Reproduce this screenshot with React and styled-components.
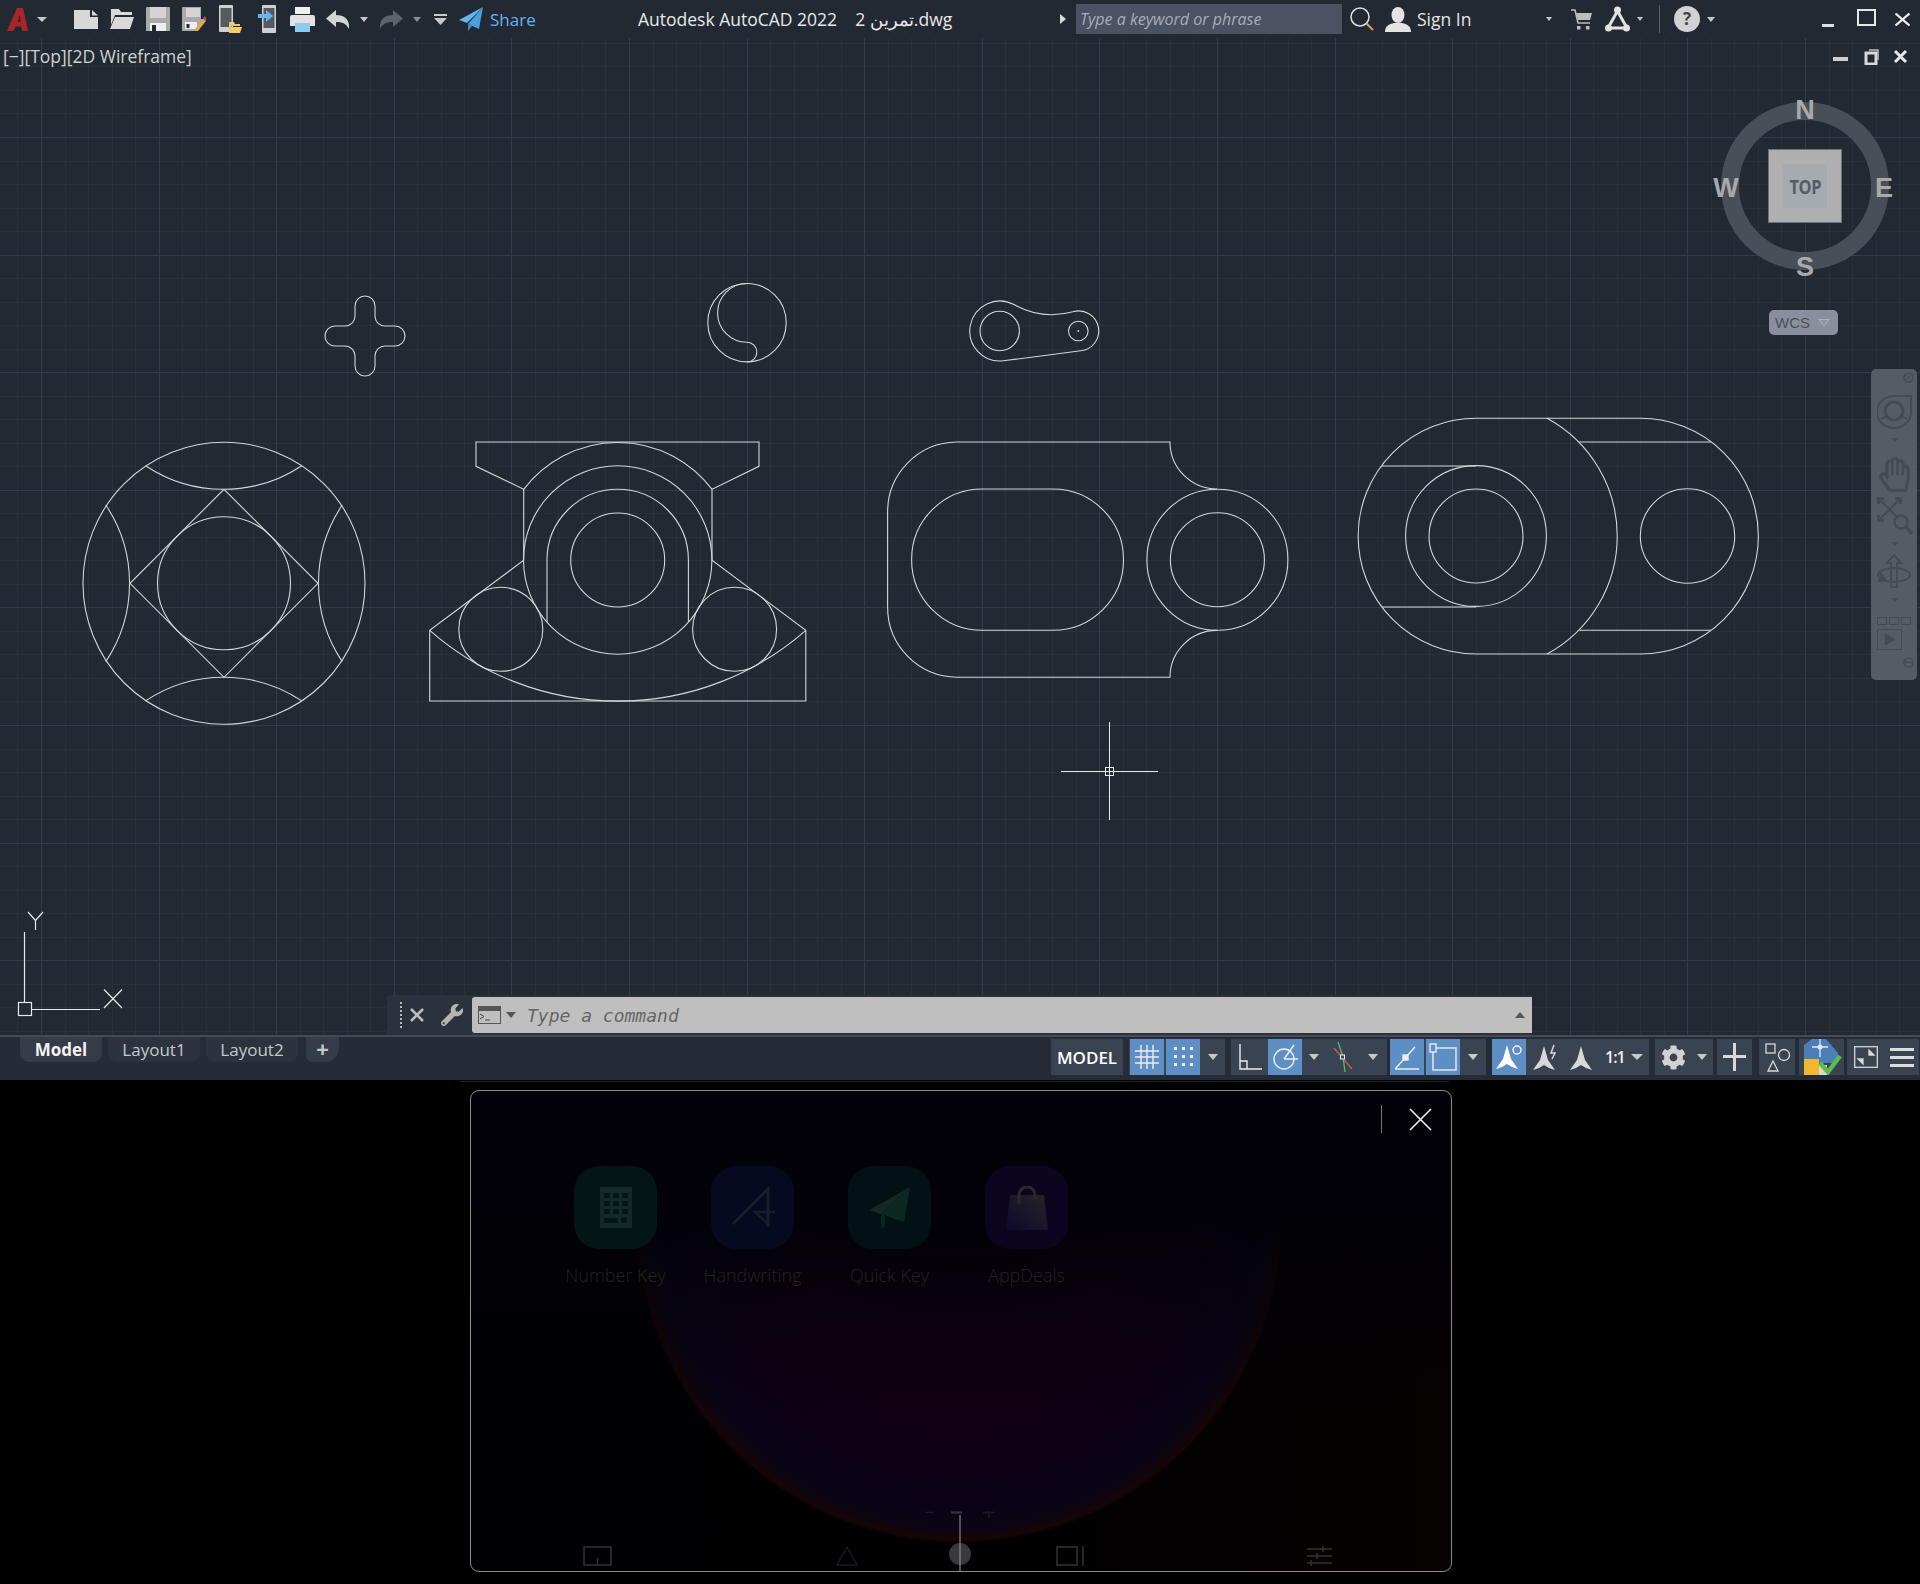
import React from "react";
import styled, { createGlobalStyle } from "styled-components";
import { FaCog, FaWrench, FaRegHandPaper } from "react-icons/fa";

const GlobalStyle = createGlobalStyle`
  html, body {
    margin: 0;
    background: #000;
    font-family: "Open Sans", "Liberation Sans", sans-serif;
  }
`;

const Page = styled.div`
  width: 1920px;
  height: 1584px;
  overflow: hidden;
  display: flex;
  flex-direction: column;
`;

/* title bar */
const TitleBar = styled.div`
  height: 38px;
  flex: none;
  display: flex;
  align-items: center;
  background: #222933;
  padding-left: 7px;
  color: #e4e4e4;
`;

const Ico = styled.svg`
  flex: none;
  display: block;
  margin-left: ${(p) => p.$ml || 0}px;
`;

const Caret = styled.span`
  flex: none;
  display: block;
  width: 0;
  height: 0;
  margin-left: ${(p) => p.$ml || 0}px;
  border-left: ${(p) => p.$w || 4}px solid transparent;
  border-right: ${(p) => p.$w || 4}px solid transparent;
  border-top: ${(p) => p.$h || 5}px solid ${(p) => p.$color || "#c9c9c9"};
`;

const ShareLabel = styled.span`
  margin-left: 7px;
  width: 44px;
  font-size: 17px;
  color: #62b5ee;
`;

const Title = styled.span`
  margin-left: 104px;
  width: 422px;
  font-size: 17.5px;
  white-space: pre;
  color: #e8e8e8;
`;

const SearchArrow = styled.span`
  flex: none;
  width: 0;
  height: 0;
  border-top: 5px solid transparent;
  border-bottom: 5px solid transparent;
  border-left: 6px solid #d8d8d8;
`;

const SearchBox = styled.div`
  flex: none;
  margin-left: 10px;
  width: 266px;
  height: 30px;
  background: #4a5264;
  display: flex;
  align-items: center;
  padding-left: 4px;
  box-sizing: border-box;
  font-size: 16px;
  font-style: italic;
  color: #a9adb8;
`;

const SignIn = styled.span`
  margin-left: 6px;
  width: 129px;
  font-size: 17.5px;
  color: #e4e4e4;
`;

const TitleSep = styled.span`
  flex: none;
  margin-left: 16px;
  width: 1px;
  height: 28px;
  background: #5a616e;
`;

/* drawing area */
const Canvas = styled.div`
  position: relative;
  height: 997px;
  flex: none;
  background: #222933;
  overflow: hidden;
`;

const Sheet = styled.svg`
  display: block;
`;

const ViewLabel = styled.span`
  position: absolute;
  left: 3px;
  top: 6px;
  font-size: 17.5px;
  color: #d0d0d0;
  white-space: pre;
`;

const ViewportControls = styled.svg`
  position: absolute;
  right: 12px;
  top: 11px;
`;

const Compass = styled.div`
  position: absolute;
  left: 1721px;
  top: 64px;
  width: 168px;
  height: 168px;
  box-sizing: border-box;
  border: 18px solid #484f59;
  border-radius: 50%;
  display: flex;
  align-items: center;
  justify-content: center;
`;

const CubeFace = styled.div`
  flex: none;
  width: 74px;
  height: 74px;
  box-sizing: border-box;
  background: #b0b0b0;
  border: 1px solid #6a6f78;
  display: flex;
  align-items: center;
  justify-content: center;
`;

const CubeInner = styled.div`
  width: 44px;
  height: 44px;
  background: #a5abaf;
  display: flex;
  align-items: center;
  justify-content: center;
`;

const CubeText = styled.span`
  font-size: 20px;
  font-weight: 700;
  color: #565b66;
  letter-spacing: -0.5px;
  transform: scaleX(0.82);
`;

const CompassLetter = styled.span`
  position: absolute;
  left: ${(p) => p.$x}px;
  top: ${(p) => p.$y}px;
  transform: translate(-50%, -50%);
  font-family: "Liberation Sans", sans-serif;
  font-size: 27px;
  font-weight: 700;
  color: #a9a9a9;
`;

const WcsBadge = styled.div`
  position: absolute;
  left: 1769px;
  top: 272px;
  width: 69px;
  height: 25px;
  box-sizing: border-box;
  padding-left: 6px;
  display: flex;
  align-items: center;
  gap: 8px;
  background: #8b8e9d;
  border-radius: 5px;
  font-family: "Liberation Sans", sans-serif;
  font-size: 15px;
  color: #4e5058;
`;

const NavBar = styled.div`
  position: absolute;
  left: 1871px;
  top: 331px;
  width: 46px;
  height: 311px;
  box-sizing: border-box;
  padding: 3px 0 0 6px;
  background: #555c65;
  border-radius: 5px;
  display: flex;
  flex-direction: column;
  color: #454b53;
`;

const NavGlyph = styled.svg`
  flex: none;
  display: block;
  margin-top: ${(p) => p.$mt || 0}px;
  margin-left: ${(p) => p.$ml || 0}px;
`;

const NavHand = styled(FaRegHandPaper)`
  flex: none;
  width: 35px;
  height: 35px;
  margin-top: 15px;
`;

const NavCaret = styled.span`
  flex: none;
  width: 0;
  height: 0;
  margin: ${(p) => p.$mt}px 0 0 14px;
  border-left: 4px solid transparent;
  border-right: 4px solid transparent;
  border-top: 4px solid #454b53;
`;

const Ucs = styled.svg`
  position: absolute;
  left: 10px;
  top: 869px;
`;

const CommandBar = styled.div`
  position: absolute;
  left: 387px;
  top: 957px;
  height: 40px;
  width: 1145px;
  display: flex;
  align-items: center;
  box-sizing: border-box;
  background: #2b323e;
  border-radius: 4px 0 0 0;
`;

const Grip = styled.span`
  flex: none;
  margin-left: 13px;
  height: 26px;
  width: 0;
  border-left: 2px dotted #b9b9b9;
`;

const Wrench = styled(FaWrench)`
  flex: none;
  margin-left: 17px;
  width: 22px;
  height: 24px;
  color: #b5b5b5;
`;

const CommandInput = styled.div`
  flex: none;
  margin-left: 9px;
  width: 1060px;
  height: 36px;
  background: #bfbfbf;
  border-radius: 3px 0 0 3px;
  display: flex;
  align-items: center;
  padding-left: 6px;
  box-sizing: border-box;
`;

const CommandText = styled.span`
  flex: 1;
  margin-left: 11px;
  font-family: "DejaVu Sans Mono", "Liberation Mono", monospace;
  font-style: italic;
  font-size: 18px;
  color: #666;
`;

const CaretUp = styled.span`
  flex: none;
  width: 0;
  height: 0;
  margin-right: 7px;
  border-left: 5px solid transparent;
  border-right: 5px solid transparent;
  border-bottom: 6px solid #555;
`;

/* status bar */
const StatusBar = styled.div`
  height: 45px;
  flex: none;
  box-sizing: border-box;
  border-top: 2px solid #454a53;
  background: #262c37;
  display: flex;
  padding-right: 1px;
`;

const Tabs = styled.div`
  flex: 1;
  display: flex;
  align-items: flex-start;
  padding-left: 20px;
  gap: 6px;
`;

const Tab = styled.div`
  height: 25px;
  box-sizing: border-box;
  width: ${(p) => p.$w}px;
  display: flex;
  align-items: center;
  justify-content: center;
  background: ${(p) => (p.$active ? "#343b49" : "#2c333f")};
  border-radius: 0 0 9px 9px;
  font-size: 17px;
  font-weight: ${(p) => (p.$active ? 700 : 400)};
  color: ${(p) => (p.$active ? "#f2f2f2" : "#c6c8cc")};
`;

const AddTab = styled(Tab)`
  margin-left: 2px;
  background: #343b49;
  font-size: 22px;
  font-weight: 700;
  padding-bottom: 4px;
  border-radius: 0 0 14px 6px;
`;

const StatusGroups = styled.div`
  display: flex;
  padding-top: 2px;
`;

const Group = styled.div`
  flex: none;
  width: ${(p) => p.$w}px;
  height: 36px;
  margin-left: ${(p) => p.$ml || 0}px;
  display: flex;
  align-items: center;
  background: #3a4351;
  color: #e6e6e6;
`;

const ModelLabel = styled(Group)`
  justify-content: center;
  font-size: 17px;
  font-weight: 600;
  color: #fff;
`;

const StatusBtn = styled.div`
  flex: none;
  width: ${(p) => p.$w || 34}px;
  height: 36px;
  margin-left: ${(p) => p.$ml || 0}px;
  display: flex;
  align-items: center;
  justify-content: center;
  background: ${(p) => (p.$on ? "#5e8fc4" : "transparent")};
`;

const Scale = styled.span`
  flex: none;
  margin-left: 12px;
  width: 21px;
  font-size: 16px;
  font-weight: 600;
  letter-spacing: -1px;
  color: #f0f0f0;
`;

const Gear = styled(FaCog)`
  flex: none;
  width: 25px;
  height: 25px;
  margin-left: 6px;
  color: #d2d2d2;
`;

/* on-screen keyboard panel in the black area */
const Desk = styled.div`
  flex: 1;
  background: #000;
  box-sizing: border-box;
  padding: 10px 0 0 470px;
`;

const DeskRule = styled.div`
  height: 1px;
  width: 990px;
  margin: -9px 0 8px -10px;
  background: #0a2730;
`;

const Panel = styled.div`
  width: 982px;
  height: 482px;
  box-sizing: border-box;
  border: 1.5px solid #8c8c8c;
  border-radius: 9px;
  display: flex;
  flex-direction: column;
  background:
    linear-gradient(180deg, #020208 0, #020208 110px, rgba(2, 2, 8, 0) 330px),
    radial-gradient(
      circle 324px at 488px 128px,
      #0a000e 0,
      #120011 48%,
      #0f0014 75%,
      #090318 90%,
      #0c0512 96%,
      #170504 99%,
      rgba(16, 8, 0, 0) 100%
    ),
    linear-gradient(90deg, #010103, #020102 60%, #080202);
`;

const PanelTop = styled.div`
  display: flex;
  align-items: flex-start;
  justify-content: flex-end;
  padding: 14px 19px 0 0;
  height: 75px;
  box-sizing: border-box;
  flex: none;
`;

const PanelSep = styled.span`
  width: 1px;
  height: 28px;
  background: #777;
`;

const TileRow = styled.div`
  display: flex;
  padding-left: 76px;
  flex: none;
`;

const TileColumn = styled.div`
  width: 137px;
  display: flex;
  flex-direction: column;
  align-items: center;
`;

const Tile = styled.div`
  width: 83px;
  height: 83px;
  border-radius: 25px;
  background: ${(p) => p.$bg};
  display: flex;
  align-items: center;
  justify-content: center;
`;

const TileLabel = styled.span`
  margin-top: 14px;
  font-size: 18px;
  font-weight: 300;
  color: #232323;
  white-space: nowrap;
`;

const Dock = styled.div`
  margin-top: auto;
  display: flex;
  align-items: flex-end;
  padding-left: 112px;
`;

const DockIcon = styled.svg`
  flex: none;
  display: block;
  margin-left: ${(p) => p.$ml || 0}px;
  margin-bottom: 5px;
`;

const DockSlider = styled.svg`
  flex: none;
  display: block;
  margin-left: ${(p) => p.$ml}px;
`;

/* canvas drawing */
const GRID_STEP = 117.6 / 5;

const gridLines = (from, to, origin) => {
  const lines = [];
  const first = Math.ceil((from - origin) / GRID_STEP);
  for (let i = first; origin + i * GRID_STEP < to; i++) {
    lines.push({ at: Math.round(origin + i * GRID_STEP) + 0.5, major: i % 5 === 0 });
  }
  return lines;
};

const Grid = () => (
  <g shapeRendering="crispEdges">
    {[false, true].map((major) => (
      <g key={String(major)} stroke={major ? "#343b4a" : "#293039"} strokeWidth="1">
        {gridLines(0, 1920, 41)
          .filter((l) => l.major === major)
          .map((l) => (
            <line key={l.at} x1={l.at} x2={l.at} y1="38" y2="1035" />
          ))}
        {gridLines(38, 1035, 137)
          .filter((l) => l.major === major)
          .map((l) => (
            <line key={l.at} x1="0" x2="1920" y1={l.at} y2={l.at} />
          ))}
      </g>
    ))}
  </g>
);

const Drawings = () => (
  <g fill="none" stroke="#d4d6d8" strokeWidth="1.1">
    {/* round plate */}
    <circle cx="224" cy="583.3" r="141" />
    <circle cx="224" cy="583.3" r="66.5" />
    <path d="M224 489.3 L318 583.3 L224 677.3 L130 583.3 Z" />
    <path d="M145.6 465.7 A141 141 0 0 0 301.8 465.7" />
    <path d="M145.6 700.9 A141 141 0 0 1 301.8 700.9" />
    <path d="M105.8 505 A141 141 0 0 1 105.8 661.6" />
    <path d="M342.2 505 A141 141 0 0 0 342.2 661.6" />

    {/* cross */}
    <path d="M355 306 A10 10 0 0 1 375 306 V316 A10 10 0 0 0 385 326 H395 A10 10 0 0 1 395 346 H385 A10 10 0 0 0 375 356 V366 A10 10 0 0 1 355 366 V356 A10 10 0 0 0 345 346 H335 A10 10 0 0 1 335 326 H345 A10 10 0 0 0 355 316 Z" />

    {/* yin yang */}
    <circle cx="747" cy="322.7" r="39.2" />
    <path d="M747 283.5 A29.4 29.4 0 0 0 747 342.3 A9.85 9.85 0 0 1 747 362" />

    {/* lever */}
    <path d="M1003.5 360.8 L1080.8 350.8 A20 20 0 1 0 1072.8 311.8 A78 78 0 0 1 1014 304.6 A30 30 0 1 0 1003.5 360.8 Z" />
    <circle cx="999.7" cy="331" r="19.7" />
    <circle cx="1078.3" cy="331" r="9.8" />
    <circle cx="1078.3" cy="331" r="0.4" />

    {/* bearing block */}
    <path d="M476 442 H759 V466.3 L712 489.3 V560.3 L805.8 630.3 V701 H429.7 V630.3 L523.7 560.3 V489.3 L476 466.3 Z" />
    <path d="M523.7 489.3 A118 118 0 0 1 712 489.3" />
    <circle cx="617.7" cy="560" r="94.2" />
    <path d="M547 621.7 V560 A70.6 70.6 0 0 1 688.4 560 V621.7" />
    <circle cx="617.7" cy="560" r="47" />
    <circle cx="500.8" cy="629.3" r="42" />
    <circle cx="734.6" cy="629.3" r="42" />
    <path d="M429.7 630.3 A285 285 0 0 0 805.8 630.3" />

    {/* slotted plate */}
    <path d="M957 442 H1170 A47 47 0 0 0 1217 489 M1217 630.4 A47 47 0 0 0 1170 677.3 H957 A70 70 0 0 1 887.6 607 V513 A70 70 0 0 1 957 442" />
    <rect x="911.6" y="489" width="211.9" height="141.3" rx="70.6" />
    <circle cx="1217.4" cy="559.7" r="70.5" />
    <circle cx="1217.4" cy="559.7" r="47" />

    {/* link */}
    <path d="M1476 418.3 H1640.5 A117.7 117.7 0 0 1 1640.5 654 H1476 A117.7 117.7 0 0 1 1476 418.3 Z" />
    <path d="M1547 418.3 A134 134 0 0 1 1547 654" />
    <path d="M1579 442 H1711 M1579 630.3 H1711 M1381.7 466 H1476 M1381.7 607 H1476" />
    <circle cx="1476" cy="536" r="70.4" />
    <circle cx="1476" cy="536" r="47" />
    <circle cx="1687.5" cy="536" r="47.2" />

    {/* cursor */}
    <g stroke="#e8e8e8" shapeRendering="crispEdges" strokeWidth="1">
      <path d="M1061 771.5 H1158 M1109.5 722 V820" />
      <rect x="1105.5" y="767.5" width="8" height="8" />
    </g>
  </g>
);

/* toolbar icons */
const NewFileIcon = (p) => (
  <Ico {...p} width="24" height="19" viewBox="0 0 24 19">
    <path d="M0 0H16V7H24V19H0Z" fill="#d8d8d8" />
    <path d="M18 0L24 5.5H18Z" fill="#d8d8d8" />
  </Ico>
);
const OpenIcon = (p) => (
  <Ico {...p} width="25" height="20" viewBox="0 0 25 20">
    <path d="M2 0H10L12 3H23V6H6L2 16Z" fill="#d8d8d8" />
    <path d="M6 8H25L21 20H1Z" fill="#d8d8d8" />
  </Ico>
);
const SaveIcon = (p) => (
  <Ico {...p} width="24" height="24" viewBox="0 0 24 24">
    <path d="M0 1Q0 0 1 0H23Q24 0 24 1V24H0Z" fill="#aaaaaa" />
    <rect x="4" y="0" width="16" height="11" fill="#d4d4d4" />
    <rect x="4" y="16" width="16" height="8" fill="#eeeeee" />
    <rect x="6" y="18" width="4" height="6" fill="#222933" />
  </Ico>
);
const SaveAsIcon = (p) => (
  <Ico {...p} width="24" height="24" viewBox="0 0 24 24">
    <path d="M0 1Q0 0 1 0H19V12H22V14L14 24H0Z" fill="#aaaaaa" />
    <rect x="4" y="1" width="14" height="9" fill="#d4d4d4" />
    <rect x="3" y="15" width="12" height="7" fill="#eeeeee" />
    <rect x="4.5" y="17" width="3" height="4" fill="#222933" />
    <path d="M13 22L22 12L24 14L16 24H13Z" fill="#e8a54a" />
    <path d="M21 11L23 9L25 13L24 14Z" fill="#d8434a" />
  </Ico>
);
const PhoneOpenIcon = (p) => (
  <Ico {...p} width="23" height="29" viewBox="0 0 23 29">
    <rect x="0" y="0" width="14" height="27" rx="1" fill="#d0d0d0" />
    <rect x="1.5" y="3" width="11" height="19" fill="#555a60" />
    <path d="M10 17H15L16 19H21V21H12L10 28Z" fill="#e8c878" />
    <path d="M12 22H23L21 28H10Z" fill="#f2cf6a" />
  </Ico>
);
const PhoneSendIcon = (p) => (
  <Ico {...p} width="18" height="29" viewBox="0 0 18 29">
    <rect x="4" y="0" width="14" height="28" rx="1" fill="#d0d0d0" />
    <rect x="5.5" y="3" width="11" height="20" fill="#555a60" />
    <path d="M0 9H8V5L15 11L8 17V13H0Z" fill="#62b5ee" />
  </Ico>
);
const PrintIcon = (p) => (
  <Ico {...p} width="25" height="25" viewBox="0 0 25 25">
    <rect x="5" y="0" width="15" height="7" fill="#f0f0f0" />
    <path d="M0 10Q0 8 2 8H23Q25 8 25 10V19H0Z" fill="#e2e2e2" />
    <rect x="5" y="16" width="15" height="9" fill="#8fcbf0" />
  </Ico>
);
const UndoIcon = ({ color, flip, ...p }) => (
  <Ico {...p} width="24" height="19" viewBox="0 0 24 19" style={flip ? { transform: "scaleX(-1)" } : undefined}>
    <path d="M10 0V5C18 5 24 9 23 19C20 13 16 12 10 12V17L0 8.5Z" fill={color} />
  </Ico>
);
const QuickAccessIcon = (p) => (
  <Ico {...p} width="13" height="11" viewBox="0 0 13 11">
    <rect x="0" y="0" width="13" height="2" fill="#c9c9c9" />
    <path d="M0 4H13L6.5 11Z" fill="#c9c9c9" />
  </Ico>
);
const PlaneIcon = (p) => (
  <Ico {...p} width="24" height="24" viewBox="0 0 24 24">
    <path d="M24 0L0 13L8 16L24 0Z" fill="#62b5ee" />
    <path d="M24 0L9 17L20 22Z" fill="#4c9fda" />
    <path d="M9 17V24L13 19Z" fill="#3f8cc4" />
  </Ico>
);
const AcadLogo = (p) => (
  <Ico {...p} width="21" height="23" viewBox="0 0 21 23">
    <path
      fillRule="evenodd"
      d="M0 23L10 0H16L21 23H15L14.4 18.5H8.5L6.3 23ZM10.6 14H13.6L12.8 6.5Z"
      fill="#a9252a"
    />
  </Ico>
);
const SearchIcon = (p) => (
  <Ico {...p} width="24" height="24" viewBox="0 0 24 24">
    <circle cx="10" cy="10" r="9" fill="none" stroke="#e0e0e0" strokeWidth="1.5" />
    <path d="M16.5 16.5L23 23" stroke="#c9a469" strokeWidth="2" />
  </Ico>
);
const PersonIcon = (p) => (
  <Ico {...p} width="26" height="25" viewBox="0 0 26 25">
    <ellipse cx="13" cy="8" rx="6.5" ry="8" fill="#e4e4e4" />
    <path d="M0 25C0 19 4 17 9 16H17C22 17 26 19 26 25Z" fill="#e4e4e4" />
  </Ico>
);
const CartIcon = (p) => (
  <Ico {...p} width="21" height="21" viewBox="0 0 21 21">
    <path d="M0 1H4L7 14H19" fill="none" stroke="#bcbcbc" strokeWidth="1.6" />
    <path d="M5 4H21L19 11H7Z" fill="#bcbcbc" />
    <rect x="6" y="17" width="3.5" height="3.5" fill="#bcbcbc" />
    <rect x="15" y="17" width="3.5" height="3.5" fill="#bcbcbc" />
  </Ico>
);
const TriNodesIcon = (p) => (
  <Ico {...p} width="25" height="26" viewBox="0 0 25 26">
    <path d="M12.5 5L22 22H3Z" fill="none" stroke="#e2e2e2" strokeWidth="3" />
    <circle cx="12.5" cy="4" r="3.5" fill="#e2e2e2" />
    <circle cx="3.5" cy="22" r="3.5" fill="#e2e2e2" />
    <circle cx="21.5" cy="22" r="3.5" fill="#e2e2e2" />
  </Ico>
);
const HelpIcon = (p) => (
  <Ico {...p} width="26" height="26" viewBox="0 0 26 26">
    <circle cx="13" cy="13" r="13" fill="#d2d2d2" />
    <text x="13" y="19" textAnchor="middle" fontSize="17" fontWeight="700" fontFamily="Open Sans" fill="#444">
      ?
    </text>
  </Ico>
);

const StatusLines = ({ w = 28, h = 28, children, ...p }) => (
  <Ico
    {...p}
    width={w}
    height={h}
    viewBox={`0 0 ${w} ${h}`}
    fill="none"
    stroke="#ededed"
    strokeWidth="1.4"
  >
    {children}
  </Ico>
);

const TowerIcon = ({ x, color = "#e4e4e4" }) => (
  <path d={`M${x} 0 L${x + 4} 14 L${x + 11} 24 L${x + 5} 22 L${x} 19 L${x - 5} 22 L${x - 11} 24 L${x - 4} 14 Z`} fill={color} />
);

const App = () => (
  <Page>
    <GlobalStyle />
    <TitleBar>
      <AcadLogo />
      <Caret $ml={9} $w={5} $h={5} />
      <NewFileIcon $ml={27} />
      <OpenIcon $ml={11} />
      <SaveIcon $ml={12} />
      <SaveAsIcon $ml={12} />
      <PhoneOpenIcon $ml={13} />
      <PhoneSendIcon $ml={16} />
      <PrintIcon $ml={14} />
      <UndoIcon $ml={11} color="#d4d4d4" />
      <Caret $ml={10} />
      <UndoIcon $ml={11} color="#5c626b" flip />
      <Caret $ml={10} $color="#8a8e95" />
      <QuickAccessIcon $ml={13} />
      <PlaneIcon $ml={12} />
      <ShareLabel>Share</ShareLabel>
      <Title>Autodesk AutoCAD 2022    تمرين 2.dwg</Title>
      <SearchArrow />
      <SearchBox>Type a keyword or phrase</SearchBox>
      <SearchIcon $ml={8} />
      <PersonIcon $ml={11} />
      <SignIn>Sign In</SignIn>
      <Caret $w={3.5} $h={4} />
      <CartIcon $ml={19} />
      <TriNodesIcon $ml={13} />
      <Caret $ml={7} $w={3.5} $h={4} />
      <TitleSep />
      <HelpIcon $ml={14} />
      <Caret $ml={7} />
      <Ico $ml={107} width="12" height="4" viewBox="0 0 12 4" style={{ marginTop: 14 }}>
        <rect width="12" height="3" fill="#e0e0e0" />
      </Ico>
      <Ico $ml={23} width="19" height="17" viewBox="0 0 19 17" style={{ marginTop: -4 }}>
        <rect x="1" y="1" width="17" height="15" fill="none" stroke="#e6e6e6" strokeWidth="2" />
      </Ico>
      <Ico $ml={19} width="15" height="13" viewBox="0 0 15 13">
        <path d="M0.5 0.5L14.5 12.5M14.5 0.5L0.5 12.5" stroke="#f0f0f0" strokeWidth="2.2" />
      </Ico>
    </TitleBar>

    <Canvas>
      <Sheet width="1920" height="997" viewBox="0 38 1920 997">
        <Grid />
        <Drawings />
      </Sheet>
      <ViewLabel>[−][Top][2D Wireframe]</ViewLabel>
      <ViewportControls width="75" height="16" viewBox="0 0 75 16">
        <rect x="0" y="8" width="15" height="4" fill="#cfcfcf" />
        <rect x="33" y="4" width="10" height="11" fill="none" stroke="#d8d8d8" strokeWidth="3" />
        <path d="M36 1H45V11" fill="none" stroke="#bcbcbc" strokeWidth="1.5" />
        <path d="M62 2L73 13M73 2L62 13" stroke="#e8e8e8" strokeWidth="3" />
      </ViewportControls>

      <Compass>
        <CubeFace>
          <CubeInner>
            <CubeText>TOP</CubeText>
          </CubeInner>
        </CubeFace>
      </Compass>
      <CompassLetter $x={1805} $y={72}>N</CompassLetter>
      <CompassLetter $x={1805} $y={229}>S</CompassLetter>
      <CompassLetter $x={1726} $y={150}>W</CompassLetter>
      <CompassLetter $x={1884} $y={150}>E</CompassLetter>
      <WcsBadge>
        WCS
        <Ico width="12" height="7" viewBox="0 0 12 7">
          <path d="M0.5 0.5H11.5L6 6.5Z" fill="#8f92a1" stroke="#b0b2be" />
        </Ico>
      </WcsBadge>

      <NavBar>
        <NavGlyph $ml={26} width="11" height="11" viewBox="0 0 11 11">
          <circle cx="5.5" cy="5.5" r="4.5" fill="none" stroke="#454b53" strokeWidth="1.5" />
          <path d="M3 3L8 8M8 3L3 8" stroke="#454b53" />
        </NavGlyph>
        <NavGlyph $mt={12} width="35" height="34" viewBox="0 0 35 34" fill="none" stroke="#454b53" strokeWidth="2">
          <path d="M17 1H34V17A17 16 0 1 1 17 1Z" />
          <circle cx="17" cy="16" r="9" strokeWidth="3" />
          <path d="M4 24L11 20M30 24L23 20" />
        </NavGlyph>
        <NavCaret $mt={9} />
        <NavHand />
        <NavGlyph $mt={5} width="36" height="38" viewBox="0 0 36 38" fill="none" stroke="#454b53">
          <path d="M3 3L20 20M22 3L3 22" strokeWidth="2" />
          <path d="M0 0H7V3H3V7H0ZM25 0V7H22V3H18V0ZM0 25V18H3V22H7V25Z" fill="#454b53" stroke="none" />
          <circle cx="24" cy="25" r="6.5" strokeWidth="2.5" />
          <path d="M29 30L35 37" strokeWidth="3.5" />
        </NavGlyph>
        <NavCaret $mt={7} />
        <NavGlyph $mt={8} width="35" height="34" viewBox="0 0 35 34" fill="none" stroke="#454b53" strokeWidth="2">
          <path d="M14 33V9H10L17 1L24 9H20V33Z" />
          <ellipse cx="17" cy="21" rx="16" ry="7" />
          <path d="M4 20L9 27L2 27Z" fill="#454b53" />
        </NavGlyph>
        <NavCaret $mt={10} />
        <NavGlyph $mt={15} width="35" height="33" viewBox="0 0 35 33" fill="none" stroke="#454b53">
          <rect x="0.5" y="0.5" width="9" height="7" />
          <rect x="12.5" y="0.5" width="9" height="7" />
          <rect x="24.5" y="0.5" width="9" height="7" />
          <rect x="0.5" y="12.5" width="24" height="20" />
          <path d="M8 17L18 22.5L8 28Z" fill="#454b53" />
        </NavGlyph>
        <NavGlyph $mt={7} $ml={26} width="11" height="11" viewBox="0 0 11 11">
          <circle cx="5.5" cy="5.5" r="4.5" fill="none" stroke="#454b53" strokeWidth="1.5" />
          <path d="M2 5.5H9" stroke="#454b53" strokeWidth="1.5" />
        </NavGlyph>
      </NavBar>

      <Ucs width="120" height="122" viewBox="0 0 120 122" fill="none" stroke="#e8e8e8" strokeWidth="1.2">
        <path d="M14.5 25V95" />
        <rect x="8.5" y="95.5" width="13" height="13" />
        <path d="M21.5 102.5H90" />
        <path d="M94 82.5L112 101M112 82.5L94 101" />
        <path d="M18 5L25.5 13.5L33 5M25.5 13.5V23" />
      </Ucs>

      <CommandBar>
        <Grip />
        <Ico $ml={8} width="14" height="14" viewBox="0 0 14 14">
          <path d="M1 1L13 13M13 1L1 13" stroke="#bdbdbd" strokeWidth="2.6" />
        </Ico>
        <Wrench />
        <CommandInput>
          <Ico width="23" height="18" viewBox="0 0 23 18">
            <rect x="0.5" y="0.5" width="22" height="17" fill="#bfbfbf" stroke="#555" />
            <rect x="0" y="0" width="23" height="5" fill="#555" />
            <path d="M2 8L6 10.5L2 13M7 14H12" fill="none" stroke="#444" />
          </Ico>
          <Caret $ml={5} $w={5} $h={6} $color="#555" />
          <CommandText>Type a command</CommandText>
          <CaretUp />
        </CommandInput>
      </CommandBar>
    </Canvas>

    <StatusBar>
      <Tabs>
        <Tab $w={82} $active>Model</Tab>
        <Tab $w={92}>Layout1</Tab>
        <Tab $w={92}>Layout2</Tab>
        <AddTab $w={33}>+</AddTab>
      </Tabs>
      <StatusGroups>
        <ModelLabel $w={72}>MODEL</ModelLabel>
        <Group $ml={6} $w={96}>
          <StatusBtn $on $ml={1}>
            <StatusLines w={24} h={24}>
              <path d="M6 0V24M12 0V24M18 0V24M0 6H24M0 12H24M0 18H24" />
            </StatusLines>
          </StatusBtn>
          <StatusBtn $on $ml={2}>
            <StatusLines w={20} h={20}>
              <path strokeWidth="3" strokeDasharray="3 5" d="M1 1.5H20M1 9.5H20M1 17.5H20" />
            </StatusLines>
          </StatusBtn>
          <Caret $ml={8} $w={5.5} $h={6.5} />
        </Group>
        <Group $ml={6} $w={156}>
          <StatusBtn $w={37}>
            <StatusLines w={24} h={26}>
              <path d="M2 0V25H24M2 17H9V25" />
            </StatusLines>
          </StatusBtn>
          <StatusBtn $on $w={34}>
            <StatusLines w={26} h={26}>
              <circle cx="12" cy="15" r="10" />
              <path d="M12 15L22 1M12 15H26" />
            </StatusLines>
          </StatusBtn>
          <Caret $ml={7} $w={5.5} $h={6.5} />
          <StatusBtn $w={35} $ml={6}>
            <Ico width="20" height="30" viewBox="0 0 20 30">
              <path d="M5 0L10 15L12 30" stroke="#4cc06a" strokeWidth="1.3" fill="none" />
              <path d="M1 6L19 27" stroke="#d05a50" strokeWidth="1.3" />
              <rect x="7.5" y="13" width="4" height="4" fill="#3a4351" stroke="#eee" />
            </Ico>
          </StatusBtn>
          <Caret $ml={8} $w={5.5} $h={6.5} />
        </Group>
        <Group $ml={3} $w={96}>
          <StatusBtn $on>
            <StatusLines w={24} h={26}>
              <path d="M0 25H24M0 25L20 3" />
              <rect x="8" y="11" width="5" height="5" fill="#ededed" />
            </StatusLines>
          </StatusBtn>
          <StatusBtn $on $ml={2}>
            <StatusLines w={28} h={28}>
              <rect x="4" y="5" width="23" height="22" />
              <rect x="1" y="1" width="6" height="8" fill="#5e8fc4" />
            </StatusLines>
          </StatusBtn>
          <Caret $ml={8} $w={5.5} $h={6.5} />
        </Group>
        <Group $ml={6} $w={157}>
          <StatusBtn $on>
            <Ico width="28" height="28" viewBox="0 0 28 28">
              <g transform="translate(1 2)">
                <TowerIcon x={11} color="#fff" />
              </g>
              <circle cx="22" cy="7" r="4" fill="none" stroke="#fff" strokeWidth="1.3" />
            </Ico>
          </StatusBtn>
          <Ico $ml={7} width="26" height="26" viewBox="0 0 26 26">
            <g transform="translate(0 2)">
              <TowerIcon x={11} color="#d8d8d8" />
            </g>
            <path d="M21 1L18 9H22L19 15" fill="none" stroke="#d8d8d8" strokeWidth="1.5" />
          </Ico>
          <Ico $ml={10} width="24" height="26" viewBox="0 0 24 26">
            <g transform="translate(1 2)">
              <TowerIcon x={11} color="#d8d8d8" />
            </g>
          </Ico>
          <Scale>1:1</Scale>
          <Caret $ml={5} $w={6} $h={6.5} />
        </Group>
        <Group $ml={6} $w={58}>
          <Gear />
          <Caret $ml={11} $w={5.5} $h={6.5} />
        </Group>
        <Group $ml={4} $w={35}>
          <Ico $ml={6} width="23" height="28" viewBox="0 0 23 28">
            <path d="M11.5 0V28M0 13.5H23" stroke="#d8d8d8" strokeWidth="3" />
          </Ico>
        </Group>
        <Group $ml={7} $w={36}>
          <Ico $ml={6} width="25" height="29" viewBox="0 0 25 29" fill="none" stroke="#d8d8d8" strokeWidth="1.3">
            <rect x="1" y="1" width="9" height="9" />
            <circle cx="19" cy="12" r="5.5" />
            <path d="M8 18L13 28H3Z" />
          </Ico>
        </Group>
        <Group $ml={4} $w={45}>
          <Ico $ml={5} width="38" height="36" viewBox="0 0 38 36">
            <path d="M8 0H22L34 14V24H0V6Z" fill="#4a7fb8" />
            <path d="M8 8H24M16 0V18" stroke="#dfe8f2" strokeWidth="1.3" />
            <circle cx="16" cy="8" r="2.5" fill="#dfe8f2" />
            <rect x="0" y="20" width="15" height="16" fill="#f1b72e" />
            <rect x="15" y="26" width="8" height="10" fill="#d8d8d8" />
            <path d="M16 24L24 33L36 17" fill="none" stroke="#5fbb4a" strokeWidth="4.5" />
          </Ico>
        </Group>
        <Group $ml={3} $w={72}>
          <Ico $ml={7} width="24" height="22" viewBox="0 0 24 22" fill="none" stroke="#d8d8d8" strokeWidth="1.3">
            <rect x="0.7" y="0.7" width="22.6" height="20.6" />
            <path d="M4 13H9V18ZM20 9H15V4Z" fill="#d8d8d8" />
          </Ico>
          <Ico $ml={12} width="24" height="19" viewBox="0 0 24 19">
            <path d="M0 1.5H24M0 9.5H24M0 17.5H24" stroke="#dcdcdc" strokeWidth="3" />
          </Ico>
        </Group>
      </StatusGroups>
    </StatusBar>

    <Desk>
      <DeskRule />
      <Panel>
        <PanelTop>
          <PanelSep />
          <Ico $ml={27} width="23" height="23" viewBox="0 0 23 23" style={{ marginTop: 3 }}>
            <path d="M1 1L22 22M22 1L1 22" stroke="#f2f2f2" strokeWidth="1.6" />
          </Ico>
        </PanelTop>
        <TileRow>
          <TileColumn>
            <Tile $bg="#031616">
              <Ico width="32" height="41" viewBox="0 0 32 41">
                <rect width="32" height="41" fill="#122a28" />
                <path d="M4 6H10V11H4ZM13 6H19V11H13ZM22 6H28V11H22ZM4 14H10V19H4ZM13 14H19V19H13ZM22 14H28V19H22ZM4 22H10V27H4ZM13 22H19V27H13ZM22 22H28V27H22ZM4 31H18V36H4Z" fill="#041616" />
                <circle cx="24" cy="33" r="3" fill="#041616" />
              </Ico>
            </Tile>
            <TileLabel>Number Key</TileLabel>
          </TileColumn>
          <TileColumn>
            <Tile $bg="#050a20">
              <Ico width="44" height="42" viewBox="0 0 44 42" fill="none" stroke="#181f2a" strokeWidth="3">
                <path d="M2 37L37 2V40" />
                <path d="M44 25H24L36 36" strokeWidth="2.4" />
              </Ico>
            </Tile>
            <TileLabel>Handwriting</TileLabel>
          </TileColumn>
          <TileColumn>
            <Tile $bg="#021114">
              <Ico width="41" height="42" viewBox="0 0 41 42">
                <path d="M41 0L0 23L12 27Z" fill="#162724" />
                <path d="M41 0L12 27L35 35Z" fill="#0c2823" />
                <path d="M12 27V42L16 40V29Z" fill="#082423" />
              </Ico>
            </Tile>
            <TileLabel>Quick Key</TileLabel>
          </TileColumn>
          <TileColumn>
            <Tile $bg="#0b0520">
              <Ico width="42" height="44" viewBox="0 0 42 44">
                <defs>
                  <linearGradient id="bagFill" x1="1" y1="0" x2="0" y2="1">
                    <stop offset="0" stopColor="#252527" />
                    <stop offset="1" stopColor="#0f082c" />
                  </linearGradient>
                </defs>
                <path d="M4 9H38L42 44H0Z" fill="url(#bagFill)" />
                <path d="M13 18V9A8 8 0 0 1 29 9V13" fill="none" stroke="#2a2a2c" strokeWidth="3" />
              </Ico>
            </Tile>
            <TileLabel>AppDeals</TileLabel>
          </TileColumn>
        </TileRow>
        <Dock>
          <DockIcon width="29" height="20" viewBox="0 0 29 20" fill="none" stroke="#333" strokeWidth="1.5">
            <rect x="1" y="1" width="27" height="18" />
            <path d="M14.5 12V19" />
          </DockIcon>
          <DockIcon $ml={224} width="22" height="20" viewBox="0 0 22 20" fill="none" stroke="#1a1a1e" strokeWidth="1.5">
            <path d="M11 1L21 19H1Z" />
          </DockIcon>
          <DockSlider $ml={67} width="70" height="60" viewBox="0 0 70 60">
            <path d="M27 1.5H38" stroke="#333" strokeWidth="2.4" transform="translate(-1 0)" />
            <path d="M0 1.5H8" stroke="#1c1c1e" strokeWidth="1.5" />
            <path d="M58 1.5H70M64 -4V7" stroke="#1c1c1e" strokeWidth="1.5" />
            <ellipse cx="35" cy="43" rx="11" ry="11" fill="#39393b" />
            <path d="M35 4V60" stroke="#a0a0a0" strokeWidth="1" />
          </DockSlider>
          <DockIcon $ml={61} width="29" height="20" viewBox="0 0 29 20" fill="none" stroke="#333" strokeWidth="1.5">
            <rect x="1" y="1" width="20" height="18" />
            <path d="M27 0V20" />
          </DockIcon>
          <DockIcon $ml={222} width="25" height="20" viewBox="0 0 25 20" fill="none" stroke="#333" strokeWidth="1.5">
            <path d="M0 3H25M0 10H25M0 17H25" />
            <path d="M16 0V6M10 7V13M4 14V20" />
          </DockIcon>
        </Dock>
      </Panel>
    </Desk>
  </Page>
);

export default App;
